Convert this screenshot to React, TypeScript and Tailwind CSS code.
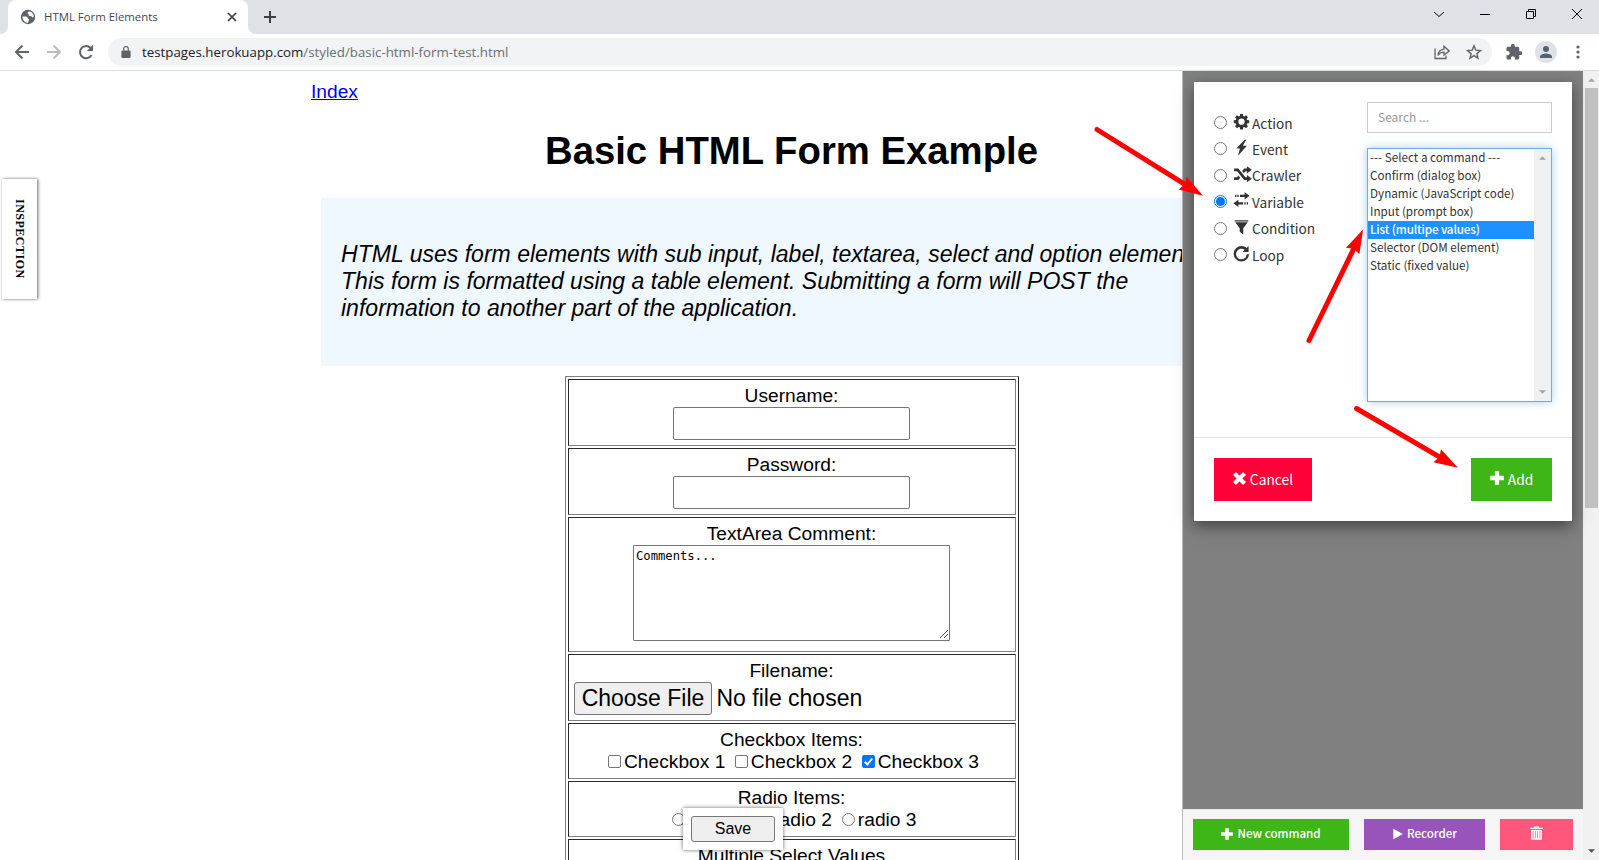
import React from "react";

type IconProps = { d: string; className?: string; box?: string };
const Icon = ({ d, className = "", box = "0.8 0.8 14.4 14.4" }: IconProps) => (
  <svg viewBox={box} className={"shrink-0 overflow-visible fill-current " + className}>
    <path d={d} fillRule="evenodd" />
  </svg>
);

const gear =
  "M6.700 .8h2.600l.4 2 1 .4 1.700-1.200 1.800 1.800L13 5.500l.4 1 2 .4v2.600l-2 .4-.4 1 1.200 1.700-1.800 1.800-1.700-1.200-1 .4-.4 2H6.700l-.4-2-1-.4-1.700 1.200-1.800-1.800L3 10.900l-.4-1-2-.4V6.900l2-.4.4-1L1.800 3.800l1.800-1.800 1.700 1.200 1-.4zM8 5.200a3 3 0 1 0 0 6 3 3 0 0 0 0-6z";
const flash = "M11 .5 3 9h3.500L4.700 15.800 13.200 6.300H9.300L12.500.5z";
const random =
  "M0 3h3.800l6.400 8h1.300V9L16 12.200l-4.500 3.300v-2H9L2.700 5.500H0zM11.500 1 16 4.200l-4.500 3.300v-2h-1.300L8.800 7.200 7.200 5.300 9 3h2.500zM0 11h2.600l1.300-1.700 1.600 2-1.700 2.200H0z";
const transfer =
  "M11 0l4.800 3.500L11 7V4.600H6.500v-2.200H11zM4 2.400h1.300v2.200H4zM1.800 2.400h1.300v2.200H1.800zM5 7.200 .2 10.700 5 14.200V11.800h4.500v-2.200H5zM10.700 9.600H12v2.200h-1.300zM13 9.600h1.300v2.200H13z";
const filter = "M1.500 1h13v1.200h-13zM2 3h12L9.700 8.800v6L6.300 12V8.800z";
const repeat =
  "M8 .8c1.900 0 3.500.7 4.800 1.800L14.800.7v5.900H9.100l2-2.100A5.100 5.100 0 1 0 13 8.600h2.300A7.400 7.400 0 1 1 8 .8z";
const remove =
  "M4 .8 8 4.800l4-4L15.200 4l-4 4 4 4L12 15.200l-4-4-4 4L.8 12l4-4-4-4z";
const plus = "M5.800 1h4.400v4.800H15v4.400h-4.800V15H5.800v-4.800H1V5.800h4.800z";
const play = "M2.500 1 15 8 2.500 15z";
const trash =
  "M5.500 .5h5v1.700H15V3.700H1V2.200h4.500zM6.500 1.500v.7h3v-.7zM2 4.700h12V15.500H2zM3.800 6v8h.8V6zM6.200 6v8H7V6zM8.900 6v8h.8V6zM11.400 6v8h.8V6z";

const Tabs = () => (
  <div className="flex h-[34px] bg-[#dee1e6]">
    <div className="w-2 bg-white"><div className="h-full rounded-br-lg bg-[#dee1e6]" /></div>
    <div className="flex h-[34px] w-[240px] items-center rounded-t-lg bg-white pl-3 pr-[11px]">
      <svg viewBox="0 0 16 16" className="h-4 w-4 shrink-0">
        <circle cx="8" cy="8" r="7.200" fill="#5f6368" />
        <path
          d="M2.500 7.500c2 .2 3.600-.2 4.600.6s.2 1.700 1.300 2 .9 1.100.1 2L8 14C4.800 13.700 2.500 11 2.500 7.500zM7.500 3.300c1-.9 2.800-1 4-.1 1.500 1.100 2.400 2.900 2.200 4.800-1 .8-1.500.2-2-.4-.7-.8-2-.3-2.800-.9-.9-.8.200-1.300-.4-1.900-.5-.4-1.400-.6-1-1.500z"
          fill="#fff"
        />
      </svg>
      <span className="ml-2 flex-1 whitespace-nowrap pb-px text-[11.400px] text-[#45494d]">HTML Form Elements</span>
      <svg viewBox="0 0 10 10" className="h-[10px] w-[10px] stroke-[#3c4043]">
        <path d="M1 1l8 8M9 1l-8 8" strokeWidth="1.700" fill="none" />
      </svg>
    </div>
    <div className="w-2 bg-white"><div className="h-full rounded-bl-lg bg-[#dee1e6]" /></div>
    <svg viewBox="0 0 12 12" className="ml-2 mt-[11px] h-3 w-3 stroke-[#3c4043]">
      <path d="M6 0v12M0 6h12" strokeWidth="2" />
    </svg>
    <div className="ml-auto mr-[17px] flex items-center gap-[36px] pb-[6px] [&>svg]:h-[10px] [&>svg]:w-[10px] [&>svg]:fill-none [&>svg]:stroke-black">
      <svg viewBox="0 0 10 10"><path d="M0 3l5 4.500L10 3" /></svg>
      <svg viewBox="0 0 10 10"><path d="M0 5.500h10" /></svg>
      <svg viewBox="0 0 10 10"><path d="M.5 2.500h7v7h-7zM2.500 2.500v-2h7v7h-2" /></svg>
      <svg viewBox="0 0 10 10"><path d="M0 0l10 10M10 0L0 10" /></svg>
    </div>
  </div>
);

const Toolbar = () => (
  <div className="flex h-[37px] items-center border-b border-[#dadce0] bg-white pl-[14px] text-[#5f6368]">
    <svg viewBox="0 0 16 16" className="h-4 w-4 fill-none stroke-[#5f6368] stroke-2">
      <path d="M15 8H2M8.500 1.500 2 8l6.500 6.500" />
    </svg>
    <svg viewBox="0 0 16 16" className="ml-4 h-4 w-4 fill-none stroke-[#babcbe] stroke-2">
      <path d="M1 8h13M7.500 1.500 14 8l-6.500 6.500" />
    </svg>
    <svg viewBox="0 0 16 16" className="ml-4 h-4 w-4">
      <path d="M13.500 11A6.100 6.100 0 1 1 12.600 4" fill="none" stroke="#5f6368" strokeWidth="2" />
      <path d="M15 .8V7H8.800z" fill="#5f6368" />
    </svg>
    <div className="ml-[14px] flex h-7 w-[1384px] items-center rounded-full bg-[#f1f3f4] pl-[13px] pr-[10px]">
      <svg viewBox="0 0 10 13" className="mb-px h-[12px] w-[10px]">
        <path d="M1 5h8q1 0 1 1v6q0 1-1 1H1q-1 0-1-1V6q0-1 1-1z" fill="#5f6368" />
        <path d="M2.500 5V3a2.500 2.500 0 0 1 5 0v2" fill="none" stroke="#5f6368" strokeWidth="1.300" />
      </svg>
      <span className="ml-[11px] flex-1 pt-px text-[13.300px] text-[#6b6f73]">
        <span className="text-[#202124]">testpages.herokuapp.com</span>/styled/basic-html-form-test.html
      </span>
      <svg viewBox="0 0 16 16" className="h-4 w-4 fill-none stroke-[#5f6368] stroke-[1.300]">
        <path d="M1 4.500v10h11v-3M4 11.500c.3-4 2.500-6 6-6.300V2.300L15.200 7 10 11V8.200C7.300 8.200 5.500 9.200 4 11.500z" />
      </svg>
      <svg viewBox="0 0 16 16" className="ml-4 h-4 w-4 fill-none stroke-[#5f6368] stroke-[1.400]">
        <path d="M8 1.800l1.800 4.300 4.700.4-3.600 3.100 1.100 4.600L8 11.700l-4 2.500 1.100-4.600L1.500 6.500l4.700-.4z" />
      </svg>
    </div>
    <svg viewBox="0 0 24 24" className="ml-[13px] h-[18px] w-[18px] fill-current">
      <path d="M20.500 11H19V7c0-1.100-.9-2-2-2h-4V3.500a2.500 2.500 0 0 0-5 0V5H4c-1.100 0-2 .9-2 2v3.800h1.500c1.500 0 2.700 1.200 2.700 2.700S5 16.200 3.500 16.200H2V20c0 1.100.9 2 2 2h3.800v-1.500c0-1.500 1.200-2.700 2.700-2.700s2.700 1.200 2.700 2.700V22H17c1.100 0 2-.9 2-2v-4h1.500a2.500 2.500 0 0 0 0-5z" />
    </svg>
    <svg viewBox="0 0 22 22" className="ml-3 h-[22px] w-[22px]">
      <circle cx="11" cy="11" r="11" fill="#dee1e6" />
      <circle cx="11" cy="8" r="3" fill="#556070" />
      <path d="M5 17v-1.500c0-2 4-3 6-3s6 1 6 3V17z" fill="#556070" />
    </svg>
    <svg viewBox="0 0 4 14" className="ml-[19px] h-[14px] w-1 fill-current">
      <circle cx="2" cy="2" r="1.600" /><circle cx="2" cy="7" r="1.600" /><circle cx="2" cy="12" r="1.600" />
    </svg>
  </div>
);

const Cell = ({ title, h, children }: { title: string; h: string; children?: React.ReactNode }) => (
  <div className={"flex shrink-0 flex-col items-center border border-[#808080] border-l-[#2b2b2b] border-t-[#2b2b2b] p-[5px] " + h}>
    <div className="h-[22px] whitespace-nowrap leading-[22px]">{title}</div>
    {children}
  </div>
);

const Check = ({ label, on }: { label: string; on?: boolean }) => (
  <span className="flex items-center whitespace-nowrap">
    {on ? (
      <svg viewBox="0 0 13 13" className="mb-px mr-[3px] h-[13px] w-[13px]">
        <rect width="13" height="13" rx="2" fill="#0075ff" />
        <path d="M2.800 6.800l2.600 2.700 4.800-6" fill="none" stroke="#fff" strokeWidth="2" />
      </svg>
    ) : (
      <span className="mb-px mr-[3px] h-[13px] w-[13px] rounded-[2px] border border-[#767676]" />
    )}
    {label}
  </span>
);

const Radio = ({ on, className = "" }: { on?: boolean; className?: string }) => (
  <span className={"flex h-[13px] w-[13px] shrink-0 items-center justify-center rounded-full border bg-white " + (on ? "border-[#0075ff] " : "border-[#767676] ") + className}>
    {on && <span className="h-[9px] w-[9px] rounded-full bg-[#0075ff]" />}
  </span>
);

const FormPage = () => (
  <div className="h-full w-[1583px] shrink-0 overflow-hidden font-['Liberation_Sans',sans-serif] text-[19.200px] text-black">
    <div className="mx-auto w-[961px]">
      <div className="pt-[10px] leading-[22px]">
        <a className="text-[#0000ee] underline">Index</a>
      </div>
      <h1 className="mt-[26px] h-[44px] whitespace-nowrap text-center text-[38.300px] font-bold leading-[44px]">Basic HTML Form Example</h1>
      <div className="mx-[10px] mt-[25px] h-[168px] bg-[#eff7ff] px-5 pt-[43px] text-[23.040px] italic leading-[27px]">
        <p className="whitespace-nowrap">HTML uses form elements with sub input, label, textarea, select and option elements.</p>
        <p className="whitespace-nowrap">This form is formatted using a table element. Submitting a form will POST the</p>
        <p className="whitespace-nowrap">information to another part of the application.</p>
      </div>
      <div className="mx-auto mt-[10px] flex h-[560px] w-[454px] flex-col gap-[2px] border border-[#808080] border-r-[#2b2b2b] p-[2px]">
        <Cell title="Username:" h="h-[67px]"><div className="h-[33px] w-[237px] rounded-[2px] border border-[#767676]" /></Cell>
        <Cell title="Password:" h="h-[67px]"><div className="h-[33px] w-[237px] rounded-[2px] border border-[#767676]" /></Cell>
        <Cell title="TextArea Comment:" h="h-[135px]">
          <div className="flex h-[96px] w-[317px] justify-between rounded-[1px] border border-[#767676] pl-[2px] pt-[2px]">
            <span className="font-['DejaVu_Sans_Mono',monospace] text-[12.200px] leading-4">Comments...</span>
            <svg viewBox="0 0 10 10" className="mb-px h-[10px] w-[10px] self-end stroke-[#555]"><path d="M1 9l8-8M5 9l4-4" /></svg>
          </div>
        </Cell>
        <Cell title="Filename:" h="h-[67px]">
          <div className="flex h-[33px] items-center self-start whitespace-nowrap text-[23px]">
            <span className="flex h-[33px] w-[138px] items-center justify-center rounded-[3px] border border-[#767676] bg-[#efefef] pl-px">Choose File</span>
            <span className="ml-[5px]">No file chosen</span>
          </div>
        </Cell>
        <Cell title="Checkbox Items:" h="h-[56px]">
          <div className="ml-[4px] flex h-[22px] items-center gap-[9.500px]">
            <Check label="Checkbox 1" /><Check label="Checkbox 2" /><Check label="Checkbox 3" on />
          </div>
        </Cell>
        <Cell title="Radio Items:" h="h-[56px]">
          <div className="ml-[6px] flex h-[22px] items-center gap-[10px]">
            {["radio 1", "radio 2", "radio 3"].map((r) => (
              <span key={r} className="flex items-center whitespace-nowrap"><Radio className="mb-px mr-[3px]" />{r}</span>
            ))}
          </div>
        </Cell>
        <Cell title="Multiple Select Values" h="h-[120px]" />
      </div>
    </div>
  </div>
);

const kinds: [string, string][] = [
  ["Action", gear], ["Event", flash], ["Crawler", random], ["Variable", transfer], ["Condition", filter], ["Loop", repeat],
];
const options = [
  "--- Select a command ---", "Confirm (dialog box)", "Dynamic (JavaScript code)", "Input (prompt box)",
  "List (multipe values)", "Selector (DOM element)", "Static (fixed value)",
];

const CommandDialog = () => (
  <div className="mx-auto mt-[11px] h-[439px] w-[378px] bg-white shadow-[0_5px_15px_rgba(0,0,0,0.5)]">
    <div className="flex h-[355px] justify-between px-5 pt-5">
      <div className="pt-[7.400px]">
        {kinds.map(([name, d]) => (
          <div key={name} className="flex h-[26.400px] items-center text-[13.700px]">
            <Radio on={name === "Variable"} />
            <Icon d={d} className={name === "Crawler" ? "mb-[2px] ml-[7px] h-[16px] w-[18px]" : "mb-[2px] ml-[7px] mr-[3px] h-[15px] w-[15px]"} />
            <span className="leading-5">{name}</span>
          </div>
        ))}
      </div>
      <div className="w-[185px]">
        <div className="h-[31px] border border-[#ccc] px-[10px] text-[12px] leading-[28px] text-[#999]">Search ...</div>
        <div className="mt-[15px] flex h-[254px] border border-[#66afe9] shadow-[0_0_8px_rgba(102,175,233,0.6)]">
          <div className="w-[166px] text-[11.700px] leading-[16px]">
            {options.map((o) => (
              <div key={o} className={"h-[18px] whitespace-nowrap pl-[2px] " + (o.startsWith("List") ? "bg-[#1e90ff] font-medium tracking-[-0.150px] text-white" : "")}>{o}</div>
            ))}
          </div>
          <div className="flex flex-1 flex-col items-center justify-between bg-[#f0f0f0] py-[7px] text-[#a3a3a3]">
            <Icon d="M0 4l4-4 4 4z" box="0 0 8 4" className="h-1 w-[7px]" />
            <Icon d="M0 0l4 4 4-4z" box="0 0 8 4" className="h-1 w-[7px]" />
          </div>
        </div>
      </div>
    </div>
    <div className="flex justify-between border-t border-[#e5e5e5] px-5 pt-5 text-[13.800px] text-white">
      <div className="flex h-[43px] w-[98px] items-center justify-center bg-[#ff0039]"><Icon d={remove} className="mb-[3px] mr-[4px] h-[13px] w-[13px]" />Cancel</div>
      <div className="flex h-[43px] w-[81px] items-center justify-center bg-[#3fb618]"><Icon d={plus} className="mb-[3px] mr-[4px] h-[14px] w-[14px]" />Add</div>
    </div>
  </div>
);

const SidePanel = () => (
  <div className="flex h-full flex-col border-l border-[#bbb] bg-[#808080] font-['Noto_Sans_CJK_SC',sans-serif] text-[#333]">
    <div className="flex-1"><CommandDialog /></div>
    <div className="flex h-[51px] gap-[15px] border-t border-[#e8e8e8] bg-[#f5f5f5] pl-[10px] pt-[9px] text-[11.600px] font-medium text-white">
      <div className="flex h-[31px] w-[156px] items-center justify-center bg-[#3fb618] pb-px"><Icon d={plus} className="mr-[4px] h-[12px] w-[12px]" />New command</div>
      <div className="flex h-[31px] w-[121px] items-center justify-center bg-[#9954bb] pb-px"><Icon d={play} className="mr-[4px] h-[12px] w-[11px]" />Recorder</div>
      <div className="flex h-[31px] w-[73px] items-center justify-center bg-[#ff577b]"><Icon d={trash} className="mb-[3px] h-[14px] w-[13px]" /></div>
    </div>
  </div>
);

const Arrow = ({ x, y, len, angle }: { x: number; y: number; len: number; angle: number }) => (
  <g transform={`translate(${x} ${y}) rotate(${angle})`}>
    <path d={`M0 0H${len - 18}`} stroke="#f00" strokeWidth="5" strokeLinecap="round" />
    <path d={`M${len} 0l-24-7.500 2.500 7.500-2.500 7.500z`} fill="#f00" />
  </g>
);

export default function App() {
  return (
    <div className="relative flex h-[860px] w-[1599px] flex-col overflow-hidden bg-white font-['Open_Sans',sans-serif]">
      <Tabs />
      <Toolbar />
      <div className="relative flex min-h-0 flex-1">
        <FormPage />
        <div className="flex w-4 shrink-0 flex-col items-center bg-[#f1f1f1] pb-[7px] pt-[7px]">
          <Icon d="M0 4l4-4 4 4z" box="0 0 8 4" className="h-1 w-[7px] text-[#a3a3a3]" />
          <div className="mt-[6px] h-[420px] w-[13px] bg-[#c1c1c1]" />
          <Icon d="M0 0l4 4 4-4z" box="0 0 8 4" className="mt-auto h-1 w-[7px] text-[#505050]" />
        </div>
        <div className="absolute right-4 top-0 h-full w-[401px]"><SidePanel /></div>
        <div className="absolute left-[2px] top-[108px] flex h-[120px] w-[35px] items-center justify-center bg-white pb-px shadow-[1px_0_3px_rgba(0,0,0,0.6)]">
          <span className="font-['Liberation_Serif',serif] text-[12px] font-bold tracking-[0.500px] [writing-mode:vertical-rl]">INSPECTION</span>
        </div>
        <div className="absolute left-[683px] top-[737px] h-[42px] w-[100px] bg-white px-2 pt-[8px] shadow-[0_0_4px_rgba(0,0,0,0.6)]">
          <div className="flex h-[26px] items-center justify-center rounded-[3px] border border-[#767676] bg-[#efefef] font-['Liberation_Sans',sans-serif] text-[16px]">Save</div>
        </div>
      </div>
      <svg viewBox="0 0 1599 860" className="pointer-events-none absolute inset-0 h-full w-full">
        <Arrow x={1097} y={129.500} len={125} angle={32} />
        <Arrow x={1309} y={340.500} len={123.500} angle={-64} />
        <Arrow x={1356.500} y={408.500} len={117.500} angle={30.300} />
      </svg>
    </div>
  );
}
